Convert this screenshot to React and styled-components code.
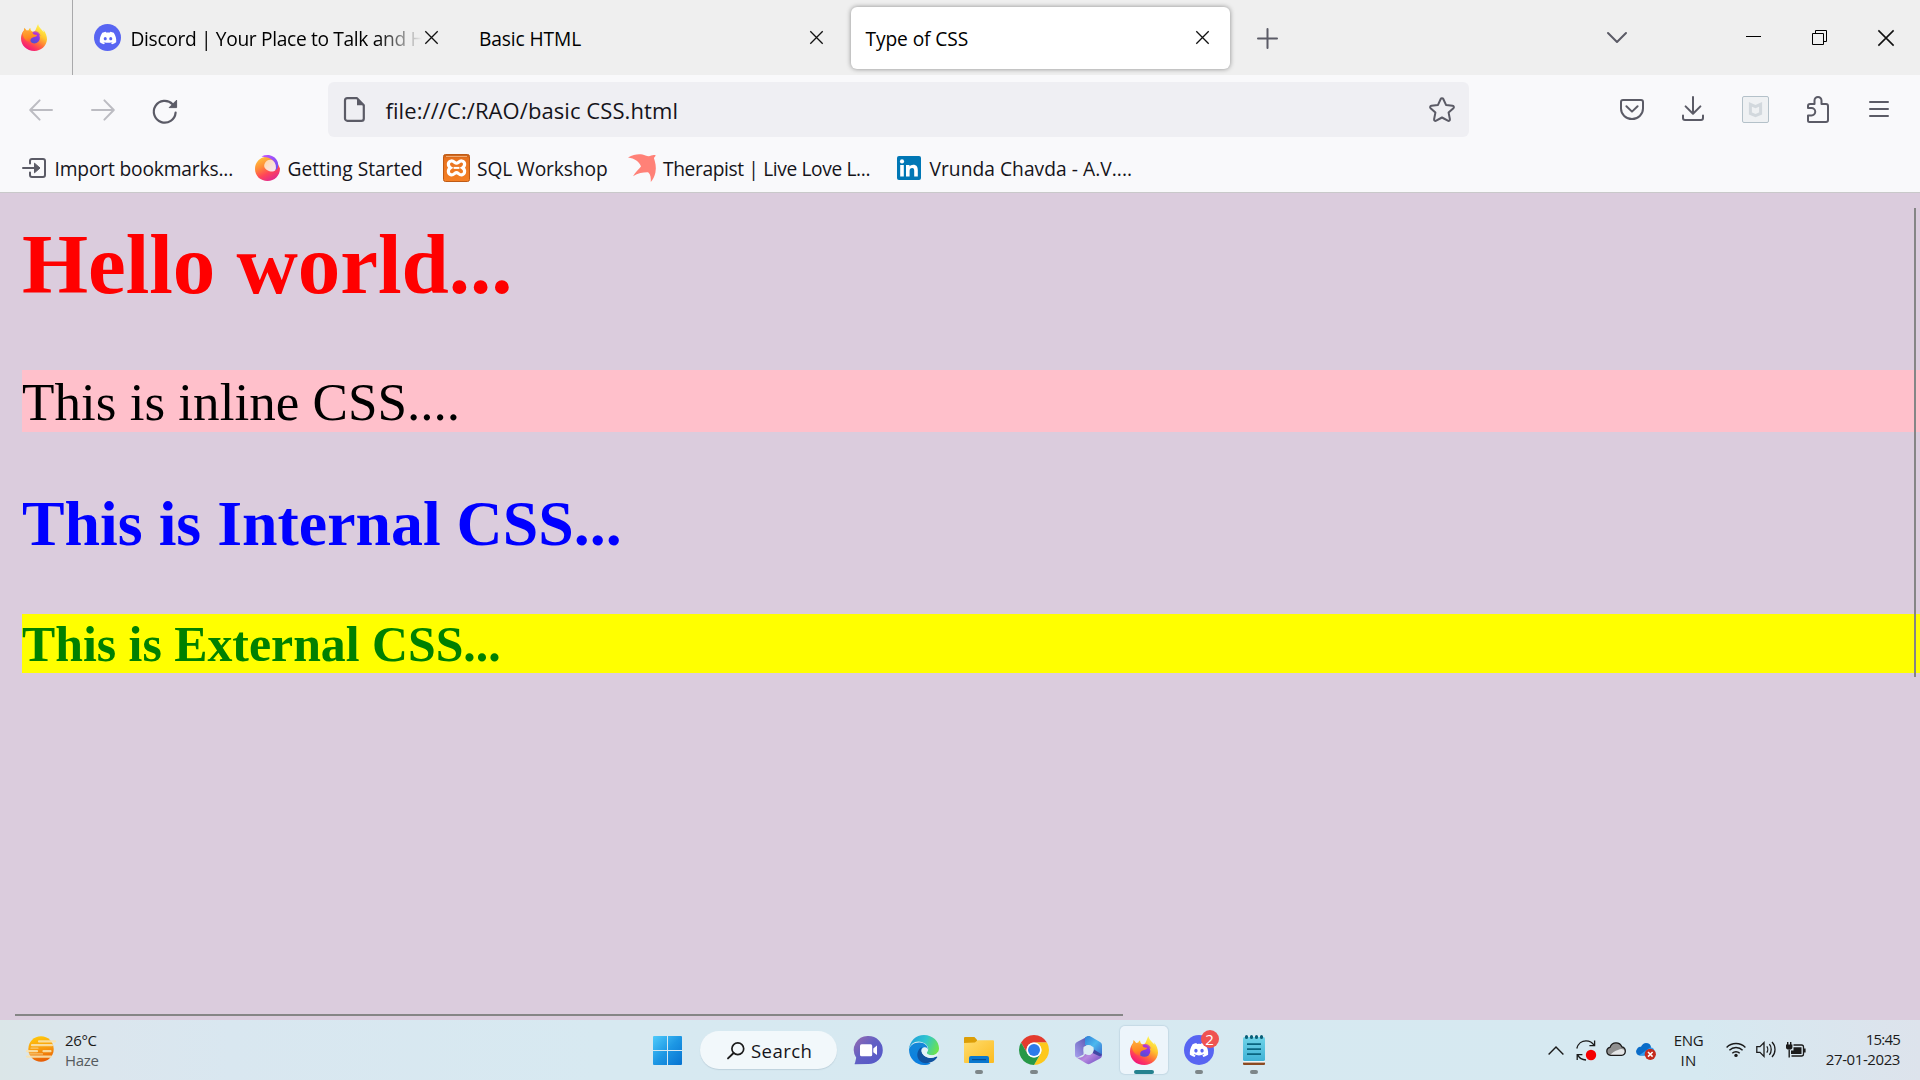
import React from "react";
import styled, { createGlobalStyle } from "styled-components";
import { FaDiscord } from "react-icons/fa";

const GlobalStyle = createGlobalStyle`
  *, *::before, *::after { box-sizing: border-box; }
  html, body { margin: 0; padding: 0; }
  body { overflow: hidden; }
`;

/* ---------- shared ---------- */

const Screen = styled.div`
  width: 1920px;
  height: 1080px;
  display: flex;
  flex-direction: column;
  overflow: hidden;
  font-family: "Open Sans", "Noto Sans", sans-serif;
  color: #15141a;
`;

const Glyph = styled.svg`
  display: block;
  flex: none;
  overflow: visible;
  fill: none;
  margin-left: ${(p) => p.$left || 0}px;
  margin-top: ${(p) => p.$drop || 0}px;
`;

const Label = styled.span`
  font-size: ${(p) => p.$size || 19.2}px;
  letter-spacing: ${(p) => p.$spacing || 0}px;
  margin-left: ${(p) => p.$left || 0}px;
  padding-top: ${(p) => p.$drop || 0}px;
  line-height: 26px;
  white-space: nowrap;
`;

const Spacer = styled.div`
  flex: ${(p) => (p.$width ? `0 0 ${p.$width}px` : 1)};
`;

/* ---------- tab strip ---------- */

const TabStrip = styled.div`
  height: 75px;
  flex: none;
  display: flex;
  align-items: center;
  background: #efefef;
`;

const PinnedTab = styled.div`
  width: 73px;
  height: 75px;
  flex: none;
  display: flex;
  align-items: center;
  padding-left: 21px;
  border-right: 1px solid #a9a9ab;
`;

const Tab = styled.div`
  width: ${(p) => p.$width}px;
  height: 62px;
  flex: none;
  display: flex;
  align-items: center;
  padding: 0 ${(p) => p.$right}px 0 ${(p) => p.$left}px;
  border-radius: 6px;
  color: #000;
  background: ${(p) => (p.$active ? "#fff" : "transparent")};
  box-shadow: ${(p) => (p.$active ? "0 0 5px rgba(0, 0, 0, 0.42)" : "none")};
`;

const TabTitle = styled(Label)`
  flex: 1;
  min-width: 0;
  padding-top: 2px;
  mask-image: ${(p) => (p.$fade ? "linear-gradient(to left, transparent 3px, #000 48px)" : "none")};
`;

const DiscordDisc = styled.div`
  width: ${(p) => p.$size}px;
  height: ${(p) => p.$size}px;
  flex: none;
  display: flex;
  align-items: center;
  justify-content: center;
  border-radius: 50%;
  background: #5865f2;
  color: #fff;
`;

const WindowControls = styled.div`
  display: flex;
  align-items: center;
  gap: 51px;
  padding-right: 26px;
`;

/* ---------- navigation ---------- */

const NavBar = styled.div`
  height: 62px;
  flex: none;
  display: flex;
  align-items: center;
  padding-top: 7px;
  background: #f9f9fb;
`;

const NavButtons = styled.div`
  width: 328px;
  flex: none;
  display: flex;
  align-items: center;
  gap: 38px;
  padding-left: 29px;
`;

const AddressBar = styled.div`
  width: 1141px;
  height: 55px;
  flex: none;
  display: flex;
  align-items: center;
  padding: 0 14px 0 16px;
  border-radius: 6px;
  background: #efeff3;
`;

const NavTools = styled.div`
  flex: 1;
  display: flex;
  align-items: center;
  padding-left: 151px;
`;

const Bookmarks = styled.div`
  height: 56px;
  flex: none;
  display: flex;
  align-items: center;
  padding: 7px 0 0 22px;
  background: #f9f9fb;
  border-bottom: 1px solid #c9c9ca;
`;

const Bookmark = styled.div`
  width: ${(p) => p.$width}px;
  flex: none;
  display: flex;
  align-items: center;
`;

/* ---------- page ---------- */

const Viewport = styled.main`
  position: relative;
  height: 827px;
  flex: none;
  padding: 23px 0 0 22px;
  background: #dbccdd;
  font-family: "Liberation Serif", "Times New Roman", serif;
`;

const Heading = styled.h1`
  margin: 0;
  font-size: 85px;
  line-height: 96px;
  letter-spacing: -0.05px;
  color: #f00;
`;

const InlineText = styled.p`
  margin: 58px 0 0;
  padding-top: 2px;
  font-size: 53.1px;
  line-height: 60px;
  color: #000;
  background: #ffc0cb;
`;

const InternalText = styled.h2`
  margin: 56px 0 0;
  font-size: 63.85px;
  line-height: 72px;
  color: #00f;
`;

const ExternalText = styled.h3`
  margin: 54px 0 0;
  padding-top: 2px;
  font-size: 49.8px;
  line-height: 57px;
  color: #008000;
  background: #ff0;
`;

const VerticalThumb = styled.div`
  position: absolute;
  top: 15px;
  right: 4px;
  width: 2px;
  height: 469px;
  background: #858585;
`;

const HorizontalThumb = styled.div`
  position: absolute;
  left: 15px;
  bottom: 4px;
  width: 1108px;
  height: 2px;
  background: #858585;
`;

/* ---------- taskbar ---------- */

const Taskbar = styled.footer`
  height: 60px;
  flex: none;
  display: grid;
  grid-template-columns: 640px 640px 640px;
  background: linear-gradient(90deg, #dbe6e8 0, #dbe6ee 110px, #d9e7f0 230px, #d7e9f1 600px, #d6e9f1 1700px, #dde3ec 1920px);
`;

const Weather = styled.div`
  display: flex;
  align-items: center;
  padding-left: 26px;
`;

const SmallText = styled.div`
  display: flex;
  flex-direction: column;
  align-items: ${(p) => p.$align || "flex-start"};
  width: ${(p) => (p.$width ? `${p.$width}px` : "auto")};
  margin-left: ${(p) => p.$left || 0}px;
  padding-bottom: ${(p) => p.$lift || 0}px;
`;

const SmallLine = styled.span`
  font-size: 15px;
  line-height: 20px;
  letter-spacing: ${(p) => p.$spacing || 0}px;
  color: ${(p) => p.$color || "#1b1b1b"};
  white-space: nowrap;
`;

const AppTray = styled.div`
  display: flex;
  align-items: center;
`;

const SearchPill = styled.div`
  width: 137px;
  height: 38px;
  flex: none;
  display: flex;
  align-items: center;
  margin: 0 4px 0 18px;
  padding-left: 27px;
  border-radius: 19px;
  background: #f2f8fb;
  box-shadow: 0 1px 1px rgba(60, 90, 110, 0.16);
`;

const AppSlot = styled.div`
  position: relative;
  width: 48px;
  height: 48px;
  flex: none;
  display: flex;
  align-items: center;
  justify-content: center;
  margin: 0 3.5px;
  border-radius: 5px;
  background: ${(p) => (p.$active ? "#edf5fb" : "transparent")};
  box-shadow: ${(p) => (p.$active ? "0 0 1px 1px rgba(120, 150, 180, 0.18)" : "none")};

  &::after {
    content: "";
    display: ${(p) => (p.$running ? "block" : "none")};
    position: absolute;
    bottom: 0;
    left: calc(50% - ${(p) => (p.$active ? 10 : 4)}px);
    width: ${(p) => (p.$active ? 20 : 8)}px;
    height: 4px;
    border-radius: 2px;
    background: ${(p) => (p.$active ? "#26828f" : "#7d8689")};
  }
`;

const Badge = styled.span`
  position: absolute;
  top: 4px;
  right: 4px;
  width: 18px;
  height: 18px;
  border-radius: 50%;
  background: #ef5350;
  color: #fff;
  font-size: 15px;
  line-height: 18px;
  text-align: center;
`;

const Tray = styled.div`
  display: flex;
  align-items: center;
  padding: 0 20px 0 268px;
`;

/* ---------- drawings ---------- */

const FirefoxLogo = ({ width = 26, height = 27 }) => (
  <Glyph width={width} height={height} viewBox="0 0 64 66" preserveAspectRatio="none">
    <defs>
      <linearGradient id="ffBody" x1="0.8" y1="0.05" x2="0.25" y2="0.95">
        <stop offset="0.05" stopColor="#fff44f" />
        <stop offset="0.35" stopColor="#ffc42e" />
        <stop offset="0.62" stopColor="#ff7139" />
        <stop offset="0.8" stopColor="#ff3b5c" />
        <stop offset="1" stopColor="#f0157a" />
      </linearGradient>
      <linearGradient id="ffGlobe" x1="0.7" y1="0" x2="0.3" y2="1">
        <stop offset="0" stopColor="#b833e1" />
        <stop offset="0.5" stopColor="#7b3be6" />
        <stop offset="1" stopColor="#4d55c8" />
      </linearGradient>
      <linearGradient id="ffHead" x1="0.3" y1="0" x2="0.5" y2="1">
        <stop offset="0" stopColor="#ffa436" />
        <stop offset="0.6" stopColor="#ff8a1f" />
        <stop offset="1" stopColor="#ff5a3c" />
      </linearGradient>
    </defs>
    <path fill="url(#ffBody)" d="M42 0C43 8 50 12 56 20C56 17 55 15 55 14C61 21 64 30 64 38C63 54 49 66 33 66C14 66 0 53 0 35C0 27 3 21 7 16L8 9C10 11 12 13 14 16L19 15C20 12 21 11 23 10C23 14 25 17 28 19C32 19 34 18 36 14C38 9 40 4 42 0Z" />
    <circle cx="33" cy="34" r="13.5" fill="url(#ffGlobe)" />
    <path fill="url(#ffHead)" d="M4 22C6 16 9 15 14 17C19 15 22 18 25 19C27 18 29 19 29 21C29 26 35 26 40 26C39 31 33 31 29 33C24 35 22 39 24 44C12 44 5 34 4 22Z" />
    <path fill="#b02fdb" opacity=".75" d="M28 20C36 15 46 20 48 29C44 26 37 27 31 25Z" />
  </Glyph>
);

const SwirlLogo = () => (
  <Glyph width="25" height="26" viewBox="0 0 50 52">
    <defs>
      <linearGradient id="swBall" x1="0" y1="0" x2="0.5" y2="1">
        <stop offset="0" stopColor="#ffd23e" />
        <stop offset="0.45" stopColor="#ff8a38" />
        <stop offset="0.75" stopColor="#ff4558" />
        <stop offset="1" stopColor="#e62e85" />
      </linearGradient>
      <linearGradient id="swArc" x1="0" y1="0" x2="1" y2="1">
        <stop offset="0" stopColor="#c455ff" />
        <stop offset="1" stopColor="#6a4df0" />
      </linearGradient>
      <linearGradient id="swCore" x1="0" y1="0" x2="1" y2="1">
        <stop offset="0" stopColor="#ffd9a8" />
        <stop offset="1" stopColor="#f6e6fa" />
      </linearGradient>
    </defs>
    <path fill="url(#swBall)" d="M16 5C8 7 0 16 0 28C0 42 11 52 25 52C39 52 50 41 50 27L44 14C40 8 32 4 26 4C22 3 19 4 16 5Z" />
    <path fill="url(#swCore)" d="M19 18C22 9 33 7 39 13C44 18 44 25 41 30C38 34 30 34 26 31C20 28 17 24 19 18Z" />
    <path fill="url(#swArc)" d="M13 3C25 -3 40 1 45 13C48 21 46 28 41 31C43 24 42 17 36 11C30 5 20 4 13 3Z" />
  </Glyph>
);

const XamppLogo = () => (
  <Glyph width="27" height="28" viewBox="0 0 27 28">
    <defs>
      <linearGradient id="xaBg" x1="0" y1="0" x2="0" y2="1">
        <stop offset="0" stopColor="#c25a12" />
        <stop offset="0.15" stopColor="#e8721f" />
        <stop offset="1" stopColor="#f58025" />
      </linearGradient>
    </defs>
    <rect x=".5" y=".5" width="26" height="27" rx="2" fill="url(#xaBg)" stroke="#bf5b16" />
    <path d="M3 2.4h21" stroke="#f3b27f" strokeWidth="1" />
    <path
      d="M8.2 7C4.6 7.6 4.6 12 7.4 13.8C4.6 15.6 4.6 20.2 8.2 20.8C11 21.2 11.6 18.6 13.5 18.6C15.4 18.6 16 21.2 18.8 20.8C22.4 20.2 22.4 15.6 19.6 13.8C22.4 12 22.4 7.6 18.8 7C16 6.6 15.4 9.2 13.5 9.2C11.6 9.2 11 6.6 8.2 7Z"
      stroke="#fff"
      strokeWidth="3.2"
    />
    <path d="M10.6 13.9h5.8" stroke="#fff" strokeWidth="2" />
  </Glyph>
);

const SwallowLogo = () => (
  <Glyph width="28" height="28" viewBox="0 0 28 28">
    <path fill="#ff8177" d="M0 3.4C7-.6 13-.5 17.5 1.4C19.5 2.3 21.4 2.4 23.2 1.6C24.8 1 26.2.9 27.8 1.4L25.9 4C27.2 8 28.6 13 27.4 18.5C26.6 22.5 25 25.6 22.8 27.9C23 24 22.6 20.6 20.4 18.4C16 18.2 10.5 19 5 22.2C7.2 18.4 10.6 15.6 13 12.6C11.4 7.4 6.6 4.2 0 3.4Z" />
  </Glyph>
);

const LinkedInMark = styled.div`
  width: 24px;
  height: 24px;
  flex: none;
  margin-left: 1px;
  border-radius: 2px;
  background: #0077b5;
`;

const LinkedInLogo = () => (
  <LinkedInMark>
    <Glyph width="24" height="24" viewBox="0 0 24 24">
      <circle cx="5" cy="5.4" r="2.1" fill="#fff" />
      <path fill="#fff" d="M3.2 9h3.6v11.6H3.2zM9 9h3.5v1.6C13.2 9.4 14.6 8.7 16.2 8.7C19.6 8.7 20.8 10.9 20.8 14.2V20.6H17.2V14.8C17.2 13.1 16.8 11.9 15.2 11.9C13.4 11.9 12.6 13.2 12.6 14.9V20.6H9Z" />
    </Glyph>
  </LinkedInMark>
);

const CloseIcon = ({ size = 13, left, drop, width = 1.3 }) => (
  <Glyph width={size} height={size} $left={left} $drop={drop} viewBox="0 0 13 13">
    <path d="M.3.3l12.4 12.4M12.7.3L.3 12.7" stroke="#111" strokeWidth={width} />
  </Glyph>
);

const WindowsLogo = () => (
  <Glyph width="29" height="29" viewBox="0 0 29 29" $left={13}>
    <defs>
      <linearGradient id="winTile" gradientUnits="userSpaceOnUse" x1="0" y1="0" x2="29" y2="29">
        <stop offset="0" stopColor="#4fcbfb" />
        <stop offset="0.5" stopColor="#1d97e4" />
        <stop offset="1" stopColor="#0672d0" />
      </linearGradient>
    </defs>
    <path fill="url(#winTile)" d="M1 0h13v14H0V1a1 1 0 0 1 1-1zM15 0h13a1 1 0 0 1 1 1v13H15zM0 15h14v14H1a1 1 0 0 1-1-1zM15 15h14v13a1 1 0 0 1-1 1H15z" />
  </Glyph>
);

const ChatLogo = () => (
  <Glyph width="29" height="29" viewBox="0 0 29 29">
    <defs>
      <linearGradient id="chatBg" x1="0" y1="0" x2="1" y2="1">
        <stop offset="0" stopColor="#9a6bae" />
        <stop offset="0.45" stopColor="#6260c4" />
        <stop offset="1" stopColor="#5257c9" />
      </linearGradient>
    </defs>
    <path fill="url(#chatBg)" d="M14.5 0A14.3 14 0 0 1 28.8 14.2A14.3 14 0 0 1 14.5 28L1.2 28.3C.4 28.3.4 27.6 1 27L2.2 21.8A14 14 0 0 1 14.5 0Z" />
    <rect x="6" y="8.3" width="12.2" height="12" rx="1.6" fill="#fff" />
    <path fill="#fff" d="M19.3 12.6L23 9.6V19L19.3 16.2Z" />
  </Glyph>
);

const EdgeLogo = () => (
  <Glyph width="30" height="30" viewBox="0 0 64 64">
    <defs>
      <linearGradient id="edgeTop" x1="0" y1="0.3" x2="1" y2="0.6">
        <stop offset="0" stopColor="#1f9fdc" />
        <stop offset="0.5" stopColor="#2fc5cf" />
        <stop offset="1" stopColor="#6de34c" />
      </linearGradient>
      <linearGradient id="edgeSide" x1="0.3" y1="0" x2="0.3" y2="1">
        <stop offset="0" stopColor="#1488d8" />
        <stop offset="1" stopColor="#0b7de0" />
      </linearGradient>
    </defs>
    <path fill="url(#edgeSide)" d="M0 31C2 22 11 16 22 16C32 16 40 22 40 30L27 34C24 48 36 58 46 60C42 63 37 64 32 64C14 64 0 50 0 31Z" />
    <path fill="#10529f" d="M25 27C16 34 15 48 24 56C33 64 52 60 60 48C61 46 59 45 58 46C45 53 30 45 27 36C26 32 26 29 28 26Z" />
    <path fill="url(#edgeTop)" d="M0 31C1 13 15 0 32 0C51 0 64 14 64 28C64 37 57 43 49 43C42 43 38 41 38 38C38 36 41 35 41 30C41 22 32 14 20 14C10 14 3 20 0 31Z" />
    <path fill="#e3f2f7" d="M27 36C24 28 34 23 39 28C42 32 38 35 38 38C38 41 42 43 49 43C54 43 59 41 62 36C63 40 61 45 58 46C45 53 30 46 27 36Z" />
  </Glyph>
);

const FolderLogo = () => (
  <Glyph width="30" height="26" viewBox="0 0 30 26">
    <defs>
      <linearGradient id="folderBody" x1="0" y1="0" x2="1" y2="1">
        <stop offset="0" stopColor="#ffdc6d" />
        <stop offset="1" stopColor="#fcbb1f" />
      </linearGradient>
    </defs>
    <path fill="#dc9e07" d="M1 0h9.4L13 2.8V6H0V1a1 1 0 0 1 1-1z" />
    <path fill="url(#folderBody)" d="M0 6L11 5.4L13.4 3.2H29a1 1 0 0 1 1 1V25a1 1 0 0 1-1 1H1a1 1 0 0 1-1-1z" />
    <path fill="#0a78cf" d="M5 26V21a2 2 0 0 1 2-2H23a2 2 0 0 1 2 2V26z" />
    <path d="M8 22.6h14" stroke="#064d92" strokeWidth="1.2" />
  </Glyph>
);

const ChromeLogo = () => (
  <Glyph width="30" height="30" viewBox="0 0 64 64">
    <path fill="#e33b2e" d="M4.3 16A32 32 0 0 1 59.7 16L32 16A16 16 0 0 0 18.14 40Z" />
    <path fill="#fdc81c" d="M59.7 16A32 32 0 0 1 32 64L45.86 40A16 16 0 0 0 32 16Z" />
    <path fill="#279847" d="M32 64A32 32 0 0 1 4.3 16L18.14 40A16 16 0 0 0 45.86 40Z" />
    <circle cx="32" cy="32" r="16" fill="#fff" />
    <circle cx="32" cy="32" r="12.8" fill="#2d7bea" />
  </Glyph>
);

const OfficeLogo = () => (
  <Glyph width="27" height="28" viewBox="0 0 54 56">
    <defs>
      <linearGradient id="offRight" x1="0" y1="0" x2="1" y2="1">
        <stop offset="0" stopColor="#2f7fd8" />
        <stop offset="0.5" stopColor="#4cb8ee" />
        <stop offset="1" stopColor="#3a6fd0" />
      </linearGradient>
      <linearGradient id="offLeft" x1="1" y1="0" x2="0" y2="1">
        <stop offset="0" stopColor="#4b4aa8" />
        <stop offset="1" stopColor="#a9a0ee" />
      </linearGradient>
      <linearGradient id="offBottom" x1="0" y1="0" x2="1" y2="0.6">
        <stop offset="0" stopColor="#8a5cc0" />
        <stop offset="0.5" stopColor="#b78ae0" />
        <stop offset="1" stopColor="#7a58c8" />
      </linearGradient>
    </defs>
    <path fill="url(#offLeft)" d="M27 0L4 12C1 14 0 16 0 19V38C0 42 3 44 7 42L17 37V22L30 16V1Z" />
    <path fill="url(#offRight)" d="M20 3C25 -1 29 -1 33 2L50 12C53 14 54 16 54 19V38L37 33V22L20 18Z" />
    <path fill="url(#offBottom)" d="M3 43C10 45 18 42 20 36L30 38L37 31L54 37C54 41 53 43 50 45L33 54C29 57 25 57 21 54Z" />
    <path fill="#4048a4" d="M38 27L54 37C53 40 51 41 48 40L35 34Z" />
    <circle cx="27" cy="28" r="10" fill="#d9ecf4" />
  </Glyph>
);

const NotepadLogo = () => (
  <Glyph width="22" height="30" viewBox="0 0 22 30">
    <defs>
      <linearGradient id="notePage" x1="0" y1="0" x2="0" y2="1">
        <stop offset="0" stopColor="#6fd3e8" />
        <stop offset="1" stopColor="#3fb2d6" />
      </linearGradient>
    </defs>
    <rect x="0" y="25" width="22" height="5" rx="1" fill="#8b4a22" />
    <rect x="0" y="24" width="22" height="3.6" fill="#eef4f6" />
    <rect x="0" y="2" width="22" height="24" rx="1.5" fill="url(#notePage)" />
    <path d="M4 9.2h14M4 14.2h14M4 19.2h14" stroke="#0a6580" strokeWidth="1.8" />
    <path d="M3.5 1.6v.8M8.5 1.6v.8M13.5 1.6v.8M18.5 1.6v.8" stroke="#0b5f78" strokeWidth="3" strokeLinecap="round" />
  </Glyph>
);

const HazeIcon = () => (
  <Glyph width="30" height="26" viewBox="0 0 30 26" $drop={-2}>
    <defs>
      <linearGradient id="hazeSun" x1="0.4" y1="0" x2="0.6" y2="1">
        <stop offset="0" stopColor="#ffc60a" />
        <stop offset="0.5" stopColor="#f89a10" />
        <stop offset="1" stopColor="#e55a06" />
      </linearGradient>
    </defs>
    <circle cx="15" cy="13" r="12.7" fill="url(#hazeSun)" />
    <path d="M13 5.4h16M6 9.2h20M1 15.2h10M17.5 15.2h7M1 20.6h24" stroke="#f8e2ae" strokeWidth="2.2" strokeLinecap="round" opacity=".9" />
    <path d="M5 12.2h7M3.5 17.9h13" stroke="#f6d28c" strokeWidth="1.2" strokeLinecap="round" opacity=".8" />
  </Glyph>
);

/* ---------- sections ---------- */

const line = { stroke: "#5b5b66", strokeWidth: 2, strokeLinecap: "round", strokeLinejoin: "round" };

function Tabs() {
  return (
    <TabStrip>
      <PinnedTab>
        <FirefoxLogo />
      </PinnedTab>
      <Tab $width={390} $left={21} $right={25.5}>
        <DiscordDisc $size={27}>
          <FaDiscord size={18} />
        </DiscordDisc>
        <TabTitle $left={9.5} $spacing={-0.34} $fade>Discord | Your Place to Talk and H</TabTitle>
        <CloseIcon left={0} />
      </Tab>
      <Tab $width={388} $left={16} $right={28}>
        <TabTitle $spacing={-0.11}>Basic HTML</TabTitle>
        <CloseIcon />
      </Tab>
      <Tab $width={379} $left={14.5} $right={21} $active>
        <TabTitle $spacing={-0.11}>Type of CSS</TabTitle>
        <CloseIcon />
      </Tab>
      <Glyph width="21" height="21" viewBox="0 0 21 21" $left={27} $drop={1}>
        <path d="M10.5 1v19M1 10.5h19" {...line} />
      </Glyph>
      <Spacer />
      <Glyph width="20" height="11" viewBox="0 0 20 11">
        <path d="M1 1l9 9 9-9" {...line} />
      </Glyph>
      <Spacer $width={119} />
      <WindowControls>
        <Glyph width="15" height="15" viewBox="0 0 15 15">
          <path d="M0 6.5h15" stroke="#000" />
        </Glyph>
        <Glyph width="15" height="15" viewBox="0 0 15 15">
          <path d="M.5 3.5h11v11H.5zM3.5 3V.5h11v11H12" stroke="#000" />
        </Glyph>
        <CloseIcon size={16} width={1.25} />
      </WindowControls>
    </TabStrip>
  );
}

function Navigation() {
  return (
    <NavBar>
      <NavButtons>
        <Glyph width="24" height="22" viewBox="0 0 24 22" $drop={1}>
          <path d="M23 11H1.4M10.6 1.4L1.2 11l9.4 9.6" {...line} stroke="#bcbcc2" />
        </Glyph>
        <Glyph width="24" height="22" viewBox="0 0 24 22" $drop={1}>
          <path d="M1 11h21.6M13.4 1.4L22.8 11l-9.4 9.6" {...line} stroke="#bcbcc2" />
        </Glyph>
        <Glyph width="24" height="25" viewBox="0 0 24 25" $drop={3}>
          <path d="M22.6 13.6A10.9 10.9 0 1 1 19.6 5.2" {...line} strokeWidth="2.2" />
          <path d="M23.6 1.2V8.6H16.2Z" fill="#5b5b66" stroke="#5b5b66" strokeLinejoin="round" />
        </Glyph>
      </NavButtons>
      <AddressBar>
        <Glyph width="21" height="25" viewBox="0 0 21 25">
          <path d="M3.4 1.2H13L19.8 8.2V21.4a2.4 2.4 0 0 1-2.4 2.4H3.4A2.4 2.4 0 0 1 1 21.4V3.6A2.4 2.4 0 0 1 3.4 1.2z" {...line} strokeWidth="2.2" />
          <path d="M13 1.2V8.2H19.8Z" fill="#5b5b66" />
        </Glyph>
        <Label $size={22} $spacing={0.08} $left={20.5}>file:///C:/RAO/basic CSS.html</Label>
        <Spacer />
        <Glyph width="26" height="25" viewBox="0 0 26 25">
          <path
            d="M11.7 2C12.2.9 13.8.9 14.3 2L17 7.9L23.6 8.7C24.9 8.9 25.3 10.3 24.4 11.2L19.6 15.6L20.9 22.2C21.1 23.5 19.9 24.3 18.8 23.7L13 20.5L7.2 23.7C6.1 24.3 4.9 23.5 5.1 22.2L6.4 15.6L1.6 11.2C.7 10.3 1.1 8.9 2.4 8.7L9 7.9Z"
            {...line}
          />
        </Glyph>
      </AddressBar>
      <NavTools>
        <Glyph width="24" height="21" viewBox="0 0 24 21">
          <path d="M3 1h18a2 2 0 0 1 2 2v6.5a11 10.5 0 0 1-22 0V3a2 2 0 0 1 2-2z" {...line} />
          <path d="M6.4 7.2L12 12.6l5.6-5.4" {...line} />
        </Glyph>
        <Glyph width="22" height="25" viewBox="0 0 22 25" $left={38} $drop={-2}>
          <path d="M11 1v16M3.6 10.4L11 17.7l7.4-7.3M1 19.6V22a2 2 0 0 0 2 2h16a2 2 0 0 0 2-2v-2.4" {...line} />
        </Glyph>
        <Glyph width="27" height="27" viewBox="0 0 27 27" $left={38}>
          <rect x=".5" y=".5" width="26" height="26" rx="1.5" fill="#eff1f3" stroke="#b4c1c9" />
          <path d="M8.4 8.3L13.5 10.7L18.6 8.3V17.4L13.5 19.6L8.4 17.4Z" stroke="#d2d8dd" strokeWidth="3" />
        </Glyph>
        <Glyph width="22" height="27" viewBox="0 0 22 27" $left={38}>
          <path
            d="M3 8H7.5V4.5a3.5 3.5 0 0 1 7 0V8H19a2 2 0 0 1 2 2V24a2 2 0 0 1-2 2H2.5A1.5 1.5 0 0 1 1 24.5V19.5H4.5a3.5 3.5 0 0 0 0-7.5H1V10A2 2 0 0 1 3 8Z"
            {...line}
          />
        </Glyph>
        <Glyph width="20" height="16" viewBox="0 0 20 16" $left={40} $drop={-1}>
          <path d="M1 1h18M1 8h18M1 15h18" {...line} />
        </Glyph>
      </NavTools>
    </NavBar>
  );
}

function BookmarkBar() {
  return (
    <Bookmarks>
      <Bookmark $width={233}>
        <Glyph width="24" height="20" viewBox="0 0 24 20">
          <path d="M8 5.5V3a2 2 0 0 1 2-2h11a2 2 0 0 1 2 2v14a2 2 0 0 1-2 2H10a2 2 0 0 1-2-2v-2.5M1 10h12" {...line} />
          <path d="M12.5 5.2L18 10l-5.5 4.8z" fill="#5b5b66" stroke="#5b5b66" strokeLinejoin="round" />
        </Glyph>
        <Label $left={8.5} $drop={2} $spacing={-0.16}>Import bookmarks...</Label>
      </Bookmark>
      <Bookmark $width={188}>
        <SwirlLogo />
        <Label $left={7.5} $drop={2} $spacing={-0.03}>Getting Started</Label>
      </Bookmark>
      <Bookmark $width={185}>
        <XamppLogo />
        <Label $left={7} $drop={2} $spacing={-0.1}>SQL Workshop</Label>
      </Bookmark>
      <Bookmark $width={268}>
        <SwallowLogo />
        <Label $left={7} $drop={2} $spacing={-0.38}>Therapist | Live Love L...</Label>
      </Bookmark>
      <Bookmark $width={240}>
        <LinkedInLogo />
        <Label $left={8.5} $drop={2} $spacing={0.04}>Vrunda Chavda - A.V....</Label>
      </Bookmark>
    </Bookmarks>
  );
}

function SystemTaskbar() {
  return (
    <Taskbar>
      <Weather>
        <HazeIcon />
        <SmallText $left={9}>
          <SmallLine $spacing={-0.35}>26°C</SmallLine>
          <SmallLine $spacing={-0.35} $color="#555b5e">Haze</SmallLine>
        </SmallText>
      </Weather>
      <AppTray>
        <WindowsLogo />
        <SearchPill>
          <Glyph width="18" height="17" viewBox="0 0 18 17">
            <circle cx="10.8" cy="6.7" r="5.9" stroke="#1b1b1b" strokeWidth="1.7" />
            <path d="M6.6 11L1 16.4" stroke="#1b1b1b" strokeWidth="1.9" strokeLinecap="round" />
          </Glyph>
          <Label $size={18.6} $drop={2} $spacing={0.4} $left={6}>Search</Label>
        </SearchPill>
        <AppSlot><ChatLogo /></AppSlot>
        <AppSlot><EdgeLogo /></AppSlot>
        <AppSlot $running><FolderLogo /></AppSlot>
        <AppSlot $running><ChromeLogo /></AppSlot>
        <AppSlot><OfficeLogo /></AppSlot>
        <AppSlot $running $active><FirefoxLogo width={28} height={29} /></AppSlot>
        <AppSlot $running>
          <DiscordDisc $size={30}>
            <FaDiscord size={20} />
          </DiscordDisc>
          <Badge>2</Badge>
        </AppSlot>
        <AppSlot $running><NotepadLogo /></AppSlot>
      </AppTray>
      <Tray>
        <Glyph width="16" height="9" viewBox="0 0 16 9">
          <path d="M.6 8.4L8 1l7.4 7.4" stroke="#1b1b1b" strokeWidth="1.4" />
        </Glyph>
        <Glyph width="20" height="21" viewBox="0 0 20 21" $left={12}>
          <path d="M.8 8.5C2 3.5 6 .8 10 .8C13.5.8 16.5 2.6 18.2 5.5M18.6.5V5.7H13.4M1.2 20V14.6H6.4M1.6 14.9C3.5 18.4 6 19.8 10 20" stroke="#1b1b1b" strokeWidth="1.3" />
          <circle cx="15" cy="15" r="5.2" fill="#f40000" />
        </Glyph>
        <Glyph width="20" height="14" viewBox="0 0 20 14" $left={10} $drop={-2}>
          <path d="M4.500 13.300A4 4 0 0 1 4 5.400C5 2.400 7.300.8 10 .8C13 .8 15 2.600 15.800 4.800A4.300 4.300 0 0 1 15.500 13.300Z" fill="#8f8f8f" />
          <path d="M4 13.300C6 10.500 9 9 12 8C15 6.500 18 6.800 19 9.500C19 12 17.500 13.300 15.500 13.300Z" fill="#e4e6e7" />
          <path d="M4.500 13.300A4 4 0 0 1 4 5.400C5 2.400 7.300.8 10 .8C13 .8 15 2.600 15.800 4.800A4.300 4.300 0 0 1 15.500 13.300Z" stroke="#1b1b1b" strokeWidth="1.3" />
        </Glyph>
        <Glyph width="20" height="17" viewBox="0 0 20 17" $left={10} $drop={2}>
          <path d="M4 12.6A4 4 0 0 1 1 6C2 4 4 3.8 5 3.8C6 1.3 8 0 10 0C13 0 14.5 1.5 15 4L14 12.6Z" fill="#0a6cc8" />
          <path d="M3 12.6L14 4.5C17 4.2 18.6 6 18.4 9L14 12.6Z" fill="#2f9df0" />
          <circle cx="14.3" cy="11.3" r="5.6" fill="#c42b1c" />
          <path d="M12 9l4.6 4.6M16.6 9L12 13.6" stroke="#fff" strokeWidth="1.5" />
        </Glyph>
        <SmallText $left={12.5} $width={40} $align="center">
          <SmallLine $spacing={-0.4}>ENG</SmallLine>
          <SmallLine $spacing={0.3}>IN</SmallLine>
        </SmallText>
        <Glyph width="20" height="15" viewBox="0 0 20 15" $left={17.5} $drop={-1}>
          <path d="M.6 5.4a13.2 13.2 0 0 1 18.8 0M3.4 8.3a9.3 9.3 0 0 1 13.2 0M6.3 11.2a5.3 5.3 0 0 1 7.4 0" stroke="#1b1b1b" strokeWidth="1.4" />
          <circle cx="10" cy="13.4" r="1.7" fill="#1b1b1b" />
        </Glyph>
        <Glyph width="20" height="17" viewBox="0 0 20 17" $left={10} $drop={-1}>
          <path d="M.8 5.6H4L8 1.6V15.4L4 11.4H.8ZM10.8 5.4C12 7 12 10 10.8 11.6M13.4 3.2C15.8 6 15.8 11 13.4 13.8M16 1C20 5 20 12 16 16" stroke="#1b1b1b" strokeWidth="1.3" />
        </Glyph>
        <Glyph width="20" height="16" viewBox="0 0 20 16" $left={10} $drop={-1}>
          <path d="M7.5 3H15.5a2 2 0 0 1 2 2v7a2 2 0 0 1-2 2H5.5" stroke="#1b1b1b" strokeWidth="1.3" />
          <path d="M7.5 5.2H15.5V12H5V8.5H7.5ZM18 6.5h1.6v4H18ZM0 2.5H6.4V5.5C6.4 7 5 7.6 4 7.6H2.6C1.3 7.6 0 7 0 5.5ZM1 0h1.4v2.5H1ZM4 0h1.4v2.5H4Z" fill="#1b1b1b" />
          <path d="M3.2 7.5V15.5" stroke="#1b1b1b" strokeWidth="1.4" />
        </Glyph>
        <Spacer />
        <SmallText $align="flex-end" $lift={2}>
          <SmallLine $spacing={-0.8}>15:45</SmallLine>
          <SmallLine $spacing={-0.41}>27-01-2023</SmallLine>
        </SmallText>
      </Tray>
    </Taskbar>
  );
}

export default function App() {
  return (
    <Screen>
      <GlobalStyle />
      <Tabs />
      <Navigation />
      <BookmarkBar />
      <Viewport>
        <Heading>Hello world...</Heading>
        <InlineText>This is inline CSS....</InlineText>
        <InternalText>This is Internal CSS...</InternalText>
        <ExternalText>This is External CSS...</ExternalText>
        <VerticalThumb />
        <HorizontalThumb />
      </Viewport>
      <SystemTaskbar />
    </Screen>
  );
}
